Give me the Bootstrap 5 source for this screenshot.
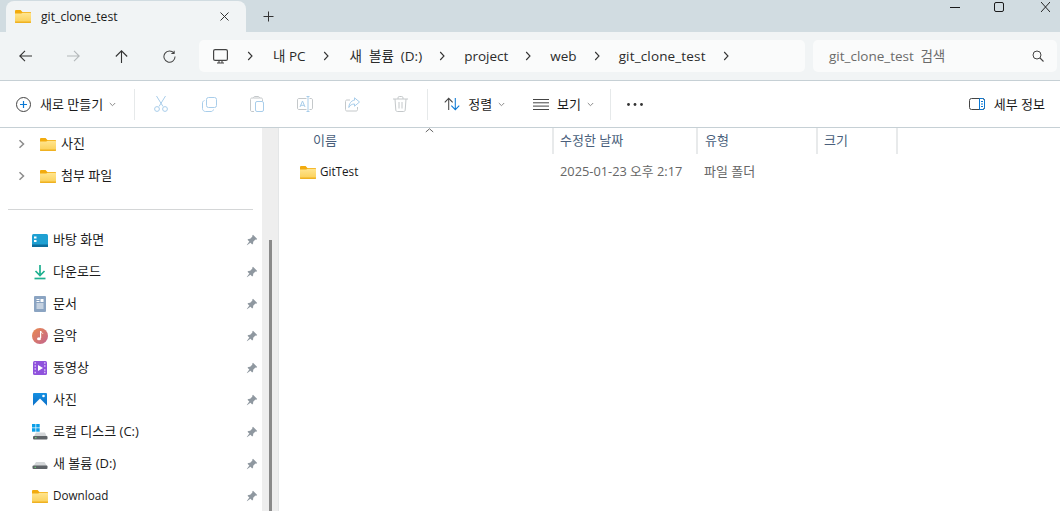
<!DOCTYPE html>
<html lang="ko">
<head>
  <meta charset="UTF-8" />
  <title>git_clone_test</title>
  <link href="https://cdn.jsdelivr.net/npm/bootstrap@5.3.3/dist/css/bootstrap.min.css" rel="stylesheet"/>
  <style>
    html, body { height: 511px; overflow: hidden; }
    body { font-family: "Open Sans", "Noto Sans CJK KR", sans-serif; font-size: 13px; color: #1a1a1a; background: #fff; line-height: 16px; }
    svg { display: block; flex: none; }
    .titlebar { height: 32px; background: #d1dce1; padding-left: 6px; }
    .wintab { width: 240px; height: 31px; margin-top: 1px; background: #f1f4f5; border-radius: 8px 8px 0 0; padding: 0 17px 0 9px; font-size: 12.2px; }
    .wintab-label { margin-left: 10px; }
    .newtab { margin: 11px 0 0 17px; }
    .winbtns { margin-left: auto; padding-right: 10px; height: 14px; }
    .addrbar { height: 49px; background: #f1f4f5; border-bottom: 1px solid #c6d0d5; padding: 0 3px 0 19px; }
    .navbtn { width: 48px; }
    .navbtn-last { width: 36px; }
    .crumbs { width: 606px; height: 32px; background: #fafbfb; border-radius: 5px; padding-left: 14px; font-size: 13.5px; color: #2b2b2b; }
    .crumb-chev { margin: 0 18px 0 16px; color: #333; }
    .crumb-first { margin: 0 19px 0 18px; }
    .crumb-before-vol { margin-right: 20px; }
    .crumb-vol { word-spacing: 3.5px; }
    .crumb-wide { letter-spacing: .15px; }
    .searchbox { width: 244px; height: 32px; margin-left: 8px; background: #fafbfb; border-radius: 5px; padding: 0 13px 0 16px; color: #6b6b6b; font-size: 13.5px; word-spacing: 3px; }
    .cmdbar { height: 47px; border-bottom: 1px solid #c6d0d5; padding: 0 15px 0 16px; }
    .cmd-sep { width: 1px; height: 31px; background: #e6e9ea; flex: none; }
    .ghost-ic { width: 48px; }
    .caret-ic { margin-left: 6px; }
    .panes { height: 384px; }
    .sidepane { width: 262px; overflow: hidden; }
    .side-row { height: 32px; }
    .tree-row { padding-left: 18px; }
    .rowtext { padding-bottom: 2px; }
    .tree-row .rowtext { margin-left: 5px; }
    .tree-chev { color: #8c8c8c; }
    .tree-row svg.folder-ic { margin-left: 14px; }
    .quick-row { padding: 0 4px 0 32px; }
    .quick-row .rowtext { margin-left: 5px; }
    .latin-text { font-size: 11.7px; }
    .side-hr { height: 1px; margin: 17px 9px 14px 8px; background: #d4d6d7; }
    .pin-ic { margin-left: auto; }
    .scrolltrack { width: 17px; background: #eeeeee; padding: 112px 0 0 7px; border-right: 1px solid #e4e6e7; }
    .scrollthumb { width: 3px; height: 280px; background: #8a8a8a; }
    .listpane { flex: 1; min-width: 0; }
    .colhead { height: 26px; color: #4a5f7c; }
    .colcell { height: 26px; border-right: 2px solid #e8eaeb; padding-left: 6px; padding-bottom: 2px; flex: none; }
    .col-name { width: 275px; padding-left: 34px; position: relative; }
    .col-date { width: 144px; }
    .col-type { width: 120px; padding-left: 7px; }
    .col-size { width: 80px; }
    .sortcaret { position: absolute; left: 146px; top: 0; }
    .filerow { height: 32px; margin-top: 2px; color: #666; }
    .filecell-name { width: 281px; padding-left: 21px; color: #1a1a1a; }
    .filecell-name span { margin-left: 4px; }
    .filecell-date { width: 144px; padding-bottom: 2px; font-size: 12.8px; }
    .filecell-type { width: 120px; padding-bottom: 2px; }
  </style>
</head>
<body>
  <svg width="0" height="0" class="position-absolute">
    <defs>
      <linearGradient id="fg" x1="0" y1="0" x2="0" y2="1"><stop offset="0" stop-color="#ffe58f"/><stop offset="1" stop-color="#fbcf55"/></linearGradient>
      <symbol id="folder" viewBox="0 0 16 13">
        <path d="M0 1.2C0 .5.5 0 1.2 0H5.6L7.4 2H15c.6 0 1 .4 1 1v2H0z" fill="#f2ab0e"/>
        <path d="M0 3.6H6.2L7.6 2.8H15c.6 0 1 .4 1 1V12c0 .6-.4 1-1 1H1c-.6 0-1-.4-1-1z" fill="url(#fg)"/>
        <path d="M0 12c0 .6.4 1 1 1h14c.6 0 1-.4 1-1v-.6H0z" fill="#efb121"/>
      </symbol>
      <symbol id="pin" viewBox="0 0 12 12">
        <path d="M7 .8l4.200 4.200-1 .8-.8-.2L7.200 7.800l-.1 1.800-.9.9L1.500 5.800l.9-.9 1.800-.1L6.400 2.600 6.200 1.800zM3.500 7.300l1.200 1.200L1 11.200.8 11z" fill="#8f98a0"/>
      </symbol>
      <symbol id="chev" viewBox="0 0 8 12">
        <path d="M2.200 2L6 6 2.200 10" fill="none" stroke="currentColor" stroke-width="1.100"/>
      </symbol>
      <symbol id="chev-bold" viewBox="0 0 8 12">
        <path d="M1.500 2.200L5.500 6 1.500 9.800" fill="none" stroke="currentColor" stroke-width="1.500"/>
      </symbol>
      <symbol id="caret" viewBox="0 0 7 5">
        <path d="M.8 1L3.500 3.700 6.200 1" fill="none" stroke="#8a8a8a" stroke-width="1"/>
      </symbol>
    </defs>
  </svg>

  <!-- tabs -->
  <div class="titlebar d-flex align-items-start">
    <div class="wintab d-flex align-items-center">
      <svg width="16" height="13"><use href="#folder"/></svg>
      <span class="wintab-label">git_clone_test</span>
      <svg class="ms-auto" width="9" height="9" viewBox="0 0 9 9"><path d="M.5 .5l8 8M8.500 .5l-8 8" stroke="#333" stroke-width="1"/></svg>
    </div>
    <svg class="newtab" width="11" height="11" viewBox="0 0 11 11"><path d="M5.500 .5v10M.5 5.500h10" stroke="#333" stroke-width="1"/></svg>
    <div class="winbtns d-flex align-items-start">
      <svg style="margin:7px 34px 0 0" width="10" height="1" viewBox="0 0 10 1"><path d="M0 .5h10" stroke="#1a1a1a"/></svg>
      <svg style="margin:2px 37px 0 0" width="10" height="10" viewBox="0 0 10 10"><rect x=".5" y=".5" width="9" height="9" rx="1.500" fill="none" stroke="#1a1a1a"/></svg>
      <svg style="margin-top:2px" width="9" height="10" viewBox="0 0 10 10" preserveAspectRatio="none"><path d="M0 0l10 10M10 0L0 10" stroke="#1a1a1a"/></svg>
    </div>
  </div>

  <!-- address bar -->
  <div class="addrbar d-flex align-items-center">
    <div class="navbtn"><svg width="13" height="12" viewBox="0 0 13 12"><path d="M.8 6H13M6 .8L.8 6 6 11.200" fill="none" stroke="#333" stroke-width="1.100"/></svg></div>
    <div class="navbtn"><svg width="13" height="12" viewBox="0 0 13 12"><path d="M0 6H12.200M7 .8L12.200 6 7 11.200" fill="none" stroke="#b4b8ba" stroke-width="1.100"/></svg></div>
    <div class="navbtn"><svg width="13" height="13" viewBox="0 0 13 13"><path d="M6.500 13V.8M.8 6.500L6.500 .8l5.700 5.700" fill="none" stroke="#333" stroke-width="1.100"/></svg></div>
    <div class="navbtn-last"><svg width="13" height="13" viewBox="0 0 14 14"><path d="M11.800 3.500A6 6 0 1 0 13 7M12 .8V3.800H9" fill="none" stroke="#444" stroke-width="1.100"/></svg></div>
    <div class="crumbs d-flex align-items-center">
      <svg width="15" height="15" viewBox="0 0 15 15"><rect x=".6" y=".6" width="13.800" height="10.800" rx="1.500" fill="none" stroke="#444" stroke-width="1.200"/><path d="M4 14h7M6 11.500V14M9 11.500V14" stroke="#444" stroke-width="1.100"/></svg>
      <svg class="crumb-chev crumb-first" width="8" height="12"><use href="#chev"/></svg>
      <span>내 PC</span>
      <svg class="crumb-chev crumb-before-vol" width="8" height="12"><use href="#chev"/></svg>
      <span class="crumb-vol">새 볼륨 (D:)</span>
      <svg class="crumb-chev" width="8" height="12"><use href="#chev"/></svg>
      <span>project</span>
      <svg class="crumb-chev" width="8" height="12"><use href="#chev"/></svg>
      <span>web</span>
      <svg class="crumb-chev" width="8" height="12"><use href="#chev"/></svg>
      <span class="crumb-wide">git_clone_test</span>
      <svg class="crumb-chev" width="8" height="12"><use href="#chev"/></svg>
    </div>
    <div class="searchbox d-flex align-items-center justify-content-between">
      <span>git_clone_test 검색</span>
      <svg width="12" height="12" viewBox="0 0 12 12"><circle cx="5" cy="5" r="4" fill="none" stroke="#444"/><path d="M8 8l3.500 3.500" stroke="#444" stroke-width="1.100"/></svg>
    </div>
  </div>

  <!-- command bar -->
  <div class="cmdbar d-flex align-items-center">
    <svg width="15" height="15" viewBox="0 0 15 15"><circle cx="7.500" cy="7.500" r="7" fill="none" stroke="#444"/><path d="M7.500 4v7M4 7.500h7" stroke="#0a78d4" stroke-width="1.200"/></svg>
    <span style="margin-left:9px">새로 만들기</span>
    <svg class="caret-ic" width="7" height="5"><use href="#caret"/></svg>
    <div class="cmd-sep" style="margin:0 19px 0 18px"></div>
    <div class="ghost-ic"><svg width="14" height="16" viewBox="0 0 14 16"><g fill="none" stroke="#a8cdea"><path d="M2.500 0l6.500 10.500M11.500 0L5 10.500"/><circle cx="3" cy="13" r="2.400"/><circle cx="11" cy="13" r="2.400"/></g></svg></div>
    <div class="ghost-ic"><svg width="15" height="15" viewBox="0 0 15 15"><g fill="none" stroke="#a8cdea"><rect x="4.500" y=".5" width="10" height="10" rx="2"/><path d="M2.500 3.500C1 4 .5 5 .5 6v5.500c0 1.700 1.300 3 3 3H9c1 0 2-.5 2.500-2"/></g></svg></div>
    <div class="ghost-ic" style="width:47px"><svg width="14" height="16" viewBox="0 0 14 16"><g fill="none"><path d="M3.500 2H2C1 2 .5 2.500.5 3.500V14c0 1 .5 1.500 1.500 1.500h2M3.500 2C3.500 1 4 .5 5 .5h3c1 0 1.500.5 1.500 1.500zM9.500 2H11c1 0 1.500.5 1.500 1.500V5" stroke="#c4c8ca"/><rect x="5.500" y="5.500" width="8" height="10" rx="1.500" stroke="#a8cdea"/></g></svg></div>
    <div class="ghost-ic"><svg width="16" height="16" viewBox="0 0 16 16"><g fill="none" stroke="#c4c8ca"><path d="M9.500 2.500H2C1 2.500.5 3 .5 4v8c0 1 .5 1.500 1.500 1.500h7.500M12.500 2.500H14c1 0 1.500.5 1.500 1.500v8c0 1-.5 1.500-1.500 1.500h-1.500"/></g><path d="M11 .5V15.500M9.500.5h3M9.500 15.500h3" fill="none" stroke="#a8cdea"/><path d="M3 11L5.500 5 8 11M3.800 9.300H7.200" fill="none" stroke="#a8cdea"/></svg></div>
    <div class="ghost-ic"><svg width="15" height="15" viewBox="0 0 15 15"><g fill="none"><path d="M5 3H2C1 3 .5 3.500.5 4.500V12.500C.5 13.500 1 14 2 14h9c1 0 1.500-.5 1.500-1.500V10" stroke="#c4c8ca"/><path d="M9.500 .8L14.500 5 9.500 9.200V7C7 7 5 8 3.800 10.500 4 7 6 3.500 9.500 3.200z" stroke="#a8cdea"/></g></svg></div>
    <div style="width:34px"><svg width="15" height="16" viewBox="0 0 15 16"><g fill="none" stroke="#c4c8ca"><path d="M0 3h15M5 3V1.800C5 1 5.500.5 6.300.5h2.400C9.500.5 10 1 10 1.800V3M2 3l.8 11c.1 1 .7 1.500 1.500 1.500h6.400c.8 0 1.400-.5 1.500-1.500L13 3M6 6v6.500M9 6v6.500"/></g></svg></div>
    <div class="cmd-sep" style="margin-right:16px"></div>
    <svg width="16" height="14" viewBox="0 0 17 14"><path d="M5 13.500V1M.8 5.200L5 1l4.200 4.200" fill="none" stroke="#444" stroke-width="1.100"/><path d="M12 .5V13M7.800 8.800L12 13l4.200-4.200" fill="none" stroke="#0a78d4" stroke-width="1.100"/></svg>
    <span class="ms-2">정렬</span>
    <svg class="caret-ic" width="7" height="5"><use href="#caret"/></svg>
    <svg style="margin-left:28px" width="16" height="11" viewBox="0 0 16 11"><path d="M0 .5h16M0 3.800h16M0 7.100h16M0 10.500h16" stroke="#444"/></svg>
    <span class="ms-2">보기</span>
    <svg class="caret-ic" width="7" height="5"><use href="#caret"/></svg>
    <div class="cmd-sep" style="margin:0 16px"></div>
    <svg width="16" height="3" viewBox="0 0 16 3"><circle cx="1.500" cy="1.500" r="1.400" fill="#333"/><circle cx="8" cy="1.500" r="1.400" fill="#333"/><circle cx="14.500" cy="1.500" r="1.400" fill="#333"/></svg>
    <div class="d-flex align-items-center ms-auto">
      <svg width="16" height="12" viewBox="0 0 16 12"><rect x=".5" y=".5" width="15" height="11" rx="2" fill="none" stroke="#444"/><path d="M10.500.5H13.500c1.300 0 2 .7 2 2v7c0 1.300-.7 2-2 2H10.500zM12 3.500h2M12 6h2M12 8.500h2" fill="none" stroke="#0a78d4"/></svg>
      <span style="margin-left:9px">세부 정보</span>
    </div>
  </div>

  <!-- panes -->
  <div class="panes d-flex">
    <nav class="sidepane">
      <div class="side-row tree-row d-flex align-items-center"><svg class="tree-chev" width="8" height="12"><use href="#chev-bold"/></svg><svg class="folder-ic" width="16" height="13"><use href="#folder"/></svg><span class="rowtext">사진</span></div>
      <div class="side-row tree-row d-flex align-items-center"><svg class="tree-chev" width="8" height="12"><use href="#chev-bold"/></svg><svg class="folder-ic" width="16" height="13"><use href="#folder"/></svg><span class="rowtext">첨부 파일</span></div>
      <div class="side-hr"></div>
      <div class="side-row quick-row d-flex align-items-center">
        <svg width="16" height="13" viewBox="0 0 16 13"><rect width="16" height="13" rx="1.500" fill="#1fa0d2"/><rect y="10.500" width="16" height="2.500" fill="#0d6d9c"/><rect x="2" y="2.500" width="2.500" height="2" fill="#fff"/><rect x="2" y="6" width="2.500" height="2" fill="#fff"/></svg>
        <span class="rowtext">바탕 화면</span><svg class="pin-ic" width="12" height="12"><use href="#pin"/></svg>
      </div>
      <div class="side-row quick-row d-flex align-items-center">
        <svg width="16" height="16" viewBox="0 0 16 16"><path d="M8 1v10M3.500 7L8 11.500 12.500 7" fill="none" stroke="#1eb090" stroke-width="1.700"/><path d="M2.500 14.500h11" stroke="#1eb090" stroke-width="1.700"/></svg>
        <span class="rowtext">다운로드</span><svg class="pin-ic" width="12" height="12"><use href="#pin"/></svg>
      </div>
      <div class="side-row quick-row d-flex align-items-center">
        <svg width="16" height="16" viewBox="0 0 16 16"><rect x="2" y="0" width="12" height="16" rx="1" fill="#8ba4c2"/><path d="M4.500 3.500h3M4.500 5.500h3M4.500 8h7M4.500 10h7M4.500 12h7" stroke="#fff"/><rect x="8.500" y="3" width="3" height="3" fill="#fff"/></svg>
        <span class="rowtext">문서</span><svg class="pin-ic" width="12" height="12"><use href="#pin"/></svg>
      </div>
      <div class="side-row quick-row d-flex align-items-center">
        <svg width="16" height="16" viewBox="0 0 16 16"><defs><linearGradient id="mg" x1="0" y1="0" x2="1" y2="1"><stop offset="0" stop-color="#ea8a4e"/><stop offset="1" stop-color="#c2648f"/></linearGradient></defs><circle cx="8" cy="8" r="8" fill="url(#mg)"/><path d="M8.600 3v7" stroke="#fff" stroke-width="1.200"/><path d="M8.600 3.200c.5 1.300 1.800 1.500 2.200 2.400" fill="none" stroke="#fff"/><ellipse cx="7" cy="10.800" rx="2" ry="1.500" fill="#fff"/></svg>
        <span class="rowtext">음악</span><svg class="pin-ic" width="12" height="12"><use href="#pin"/></svg>
      </div>
      <div class="side-row quick-row d-flex align-items-center">
        <svg width="16" height="16" viewBox="0 0 16 16"><rect x="1" y="1" width="14" height="14" rx="1.500" fill="#8f52dc"/><path d="M6 5l5 3-5 3z" fill="#fff"/><path d="M2.500 3h1.500M2.500 6h1.500M2.500 9h1.500M2.500 12.500h1.500M12 3h1.500M12 6h1.500M12 10h1.500M12 12.500h1.500" stroke="#d7bdf5" stroke-width="1.400"/></svg>
        <span class="rowtext">동영상</span><svg class="pin-ic" width="12" height="12"><use href="#pin"/></svg>
      </div>
      <div class="side-row quick-row d-flex align-items-center">
        <svg width="16" height="16" viewBox="0 0 16 16"><defs><linearGradient id="pg" x1="0" y1="0" x2="0" y2="1"><stop offset="0" stop-color="#1590e2"/><stop offset="1" stop-color="#0a6bc4"/></linearGradient></defs><rect x="1" y="1" width="14" height="14" rx="1" fill="url(#pg)"/><path d="M1 15V13.500L8 6.500 15 13.500V15z" fill="#fff"/><circle cx="11.500" cy="4" r="1.300" fill="#fff"/></svg>
        <span class="rowtext">사진</span><svg class="pin-ic" width="12" height="12"><use href="#pin"/></svg>
      </div>
      <div class="side-row quick-row d-flex align-items-center">
        <svg width="16" height="16" viewBox="0 0 16 16"><rect x="0" y="0" width="3.500" height="3.500" fill="#0c9fe8"/><rect x="4.200" y="0" width="3.500" height="3.500" fill="#0c9fe8"/><rect x="0" y="4.200" width="3.500" height="3.500" fill="#0c9fe8"/><rect x="4.200" y="4.200" width="3.500" height="3.500" fill="#0c9fe8"/><path d="M1.500 13L4 8.500h9L15 13z" fill="#d3d6d8"/><rect x="1" y="12" width="14.500" height="3.500" rx="1" fill="#5e6367"/><rect x="3" y="13.200" width="1.500" height="1" fill="#6fe07a"/></svg>
        <span class="rowtext">로컬 디스크 (C:)</span><svg class="pin-ic" width="12" height="12"><use href="#pin"/></svg>
      </div>
      <div class="side-row quick-row d-flex align-items-center">
        <svg width="16" height="16" viewBox="0 0 16 16"><path d="M1.500 10L4 6h8.500L15 10z" fill="#d3d6d8"/><rect x=".5" y="9.500" width="15" height="3.500" rx="1" fill="#5e6367"/><rect x="2.500" y="10.800" width="1.500" height="1" fill="#6fe07a"/></svg>
        <span class="rowtext">새 볼륨 (D:)</span><svg class="pin-ic" width="12" height="12"><use href="#pin"/></svg>
      </div>
      <div class="side-row quick-row d-flex align-items-center">
        <svg width="16" height="13"><use href="#folder"/></svg>
        <span class="rowtext latin-text">Download</span><svg class="pin-ic" width="12" height="12"><use href="#pin"/></svg>
      </div>
    </nav>
    <div class="scrolltrack"><div class="scrollthumb"></div></div>
    <main class="listpane">
      <div class="colhead d-flex">
        <div class="colcell col-name d-flex align-items-center">
          <svg class="sortcaret" width="9" height="5" viewBox="0 0 9 5"><path d="M.8 4L4.500 .8 8.200 4" fill="none" stroke="#666"/></svg>
          이름
        </div>
        <div class="colcell col-date d-flex align-items-center">수정한 날짜</div>
        <div class="colcell col-type d-flex align-items-center">유형</div>
        <div class="colcell col-size d-flex align-items-center">크기</div>
      </div>
      <div class="filerow d-flex align-items-center">
        <div class="filecell-name d-flex align-items-center"><svg width="16" height="13"><use href="#folder"/></svg><span class="latin-text rowtext">GitTest</span></div>
        <div class="filecell-date">2025-01-23 오후 2:17</div>
        <div class="filecell-type">파일 폴더</div>
      </div>
    </main>
  </div>

  <script src="https://cdn.jsdelivr.net/npm/bootstrap@5.3.3/dist/js/bootstrap.bundle.min.js"></script>
</body>
</html>
